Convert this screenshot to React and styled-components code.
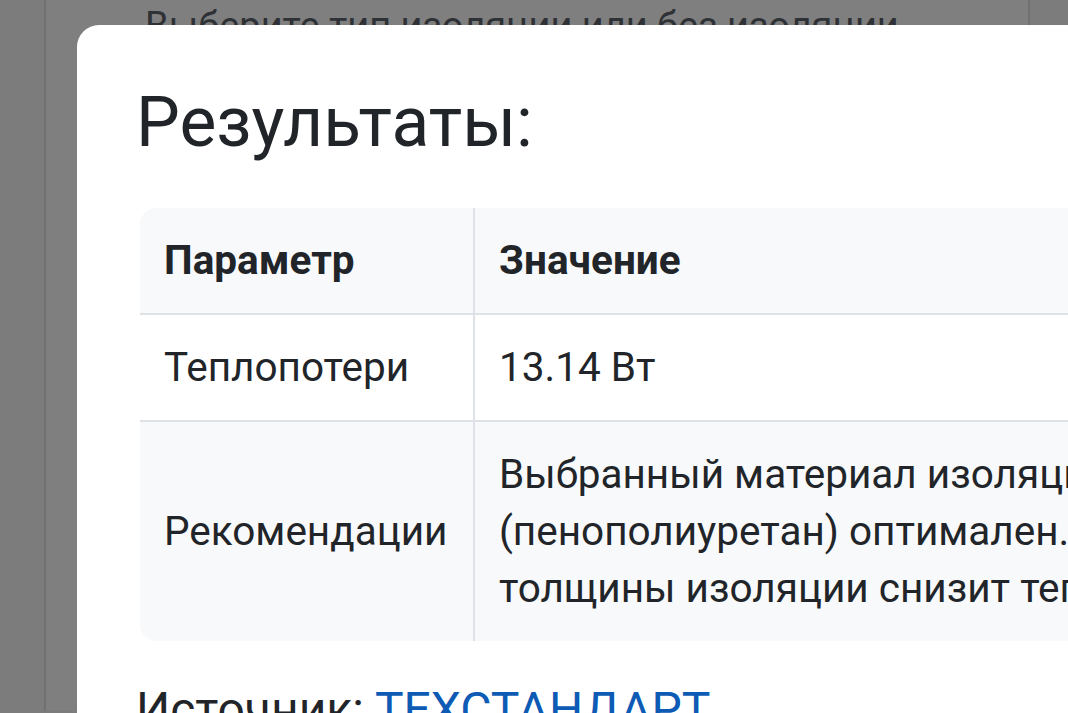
import React from "react"
import styled, { createGlobalStyle } from "styled-components"

const GlobalStyle = createGlobalStyle`
  html, body {
    margin: 0;
    padding: 0;
    overflow: hidden;
    background: #ffffff;
    font-family: Roboto, "Liberation Sans", sans-serif;
    color: #212529;
  }
`

const Screen = styled.div`
  position: relative;
  width: 1068px;
  height: 713px;
  overflow: hidden;
  background: #f8f9fa;
`

const PageCard = styled.div`
  margin-left: 44px;
  width: 986px;
  height: 713px;
  background: #ffffff;
  border-left: 2px solid #dee2e6;
  border-right: 2px solid #dee2e6;
  padding-left: 99px;
  box-sizing: border-box;
`

const PageHint = styled.p`
  margin: -2px 0 0;
  font-size: 38px;
  line-height: 56px;
  color: #5c636a;
  white-space: nowrap;
`

const Backdrop = styled.div`
  position: absolute;
  inset: 0;
  background: rgba(0, 0, 0, 0.5);
`

const Modal = styled.div`
  position: absolute;
  top: 25px;
  left: 77px;
  width: 1120px;
  height: 760px;
  background: #ffffff;
  border-radius: 22px;
  padding: 56px 0 0 59px;
  box-sizing: border-box;
`

const Title = styled.h2`
  margin: 0 0 43px;
  font-size: 69.5px;
  font-weight: 400;
  line-height: 84px;
  color: #212529;
`

const TableWrap = styled.div`
  margin-left: 4px;
  border-radius: 16px 0 0 16px;
  overflow: hidden;
`

const Table = styled.table`
  border-collapse: collapse;
  table-layout: fixed;
  width: 100%;
  font-size: 40.5px;
  line-height: 57px;
`

const Row = styled.tr`
  background: ${props => (props.$shaded ? "#f8f9fa" : "#ffffff")};
  border-bottom: ${props => (props.$last ? "none" : "2px solid #dee2e6")};
`

const Cell = styled.td`
  padding: 24px;
  vertical-align: middle;
  text-align: left;
  font-weight: ${props => (props.$head ? 700 : 400)};
  white-space: nowrap;

  &:first-child {
    width: 334px;
    box-sizing: border-box;
    border-right: 2px solid #dee2e6;
  }
`

const Line = styled.span`
  display: block;
`

const Source = styled.p`
  margin: 34px 0 0;
  font-size: 48px;
  line-height: 70px;
  color: #212529;
`

const SourceLink = styled.a`
  color: #0d5bb5;
  text-decoration: none;
`

const rows = [
  { name: "Теплопотери", value: ["13.14 Вт"] },
  {
    name: "Рекомендации",
    value: [
      "Выбранный материал изоляции",
      "(пенополиуретан) оптимален. Увеличение",
      "толщины изоляции снизит теплопотери.",
    ],
  },
]

const App = () => {
  return (
    <>
      <GlobalStyle />
      <Screen>
        <PageCard>
          <PageHint>Выберите тип изоляции или без изоляции</PageHint>
        </PageCard>
        <Backdrop />
        <Modal>
          <Title>Результаты:</Title>
          <TableWrap>
            <Table>
              <thead>
                <Row $shaded>
                  <Cell as="th" $head>Параметр</Cell>
                  <Cell as="th" $head>Значение</Cell>
                </Row>
              </thead>
              <tbody>
                {rows.map((row, i) => (
                  <Row key={row.name} $shaded={i % 2 === 1} $last={i === rows.length - 1}>
                    <Cell>{row.name}</Cell>
                    <Cell>
                      {row.value.map(line => (
                        <Line key={line}>{line}</Line>
                      ))}
                    </Cell>
                  </Row>
                ))}
              </tbody>
            </Table>
          </TableWrap>
          <Source>
            Источник: <SourceLink href="#">ТЕХСТАНДАРТ</SourceLink>
          </Source>
        </Modal>
      </Screen>
    </>
  )
}

export default App
